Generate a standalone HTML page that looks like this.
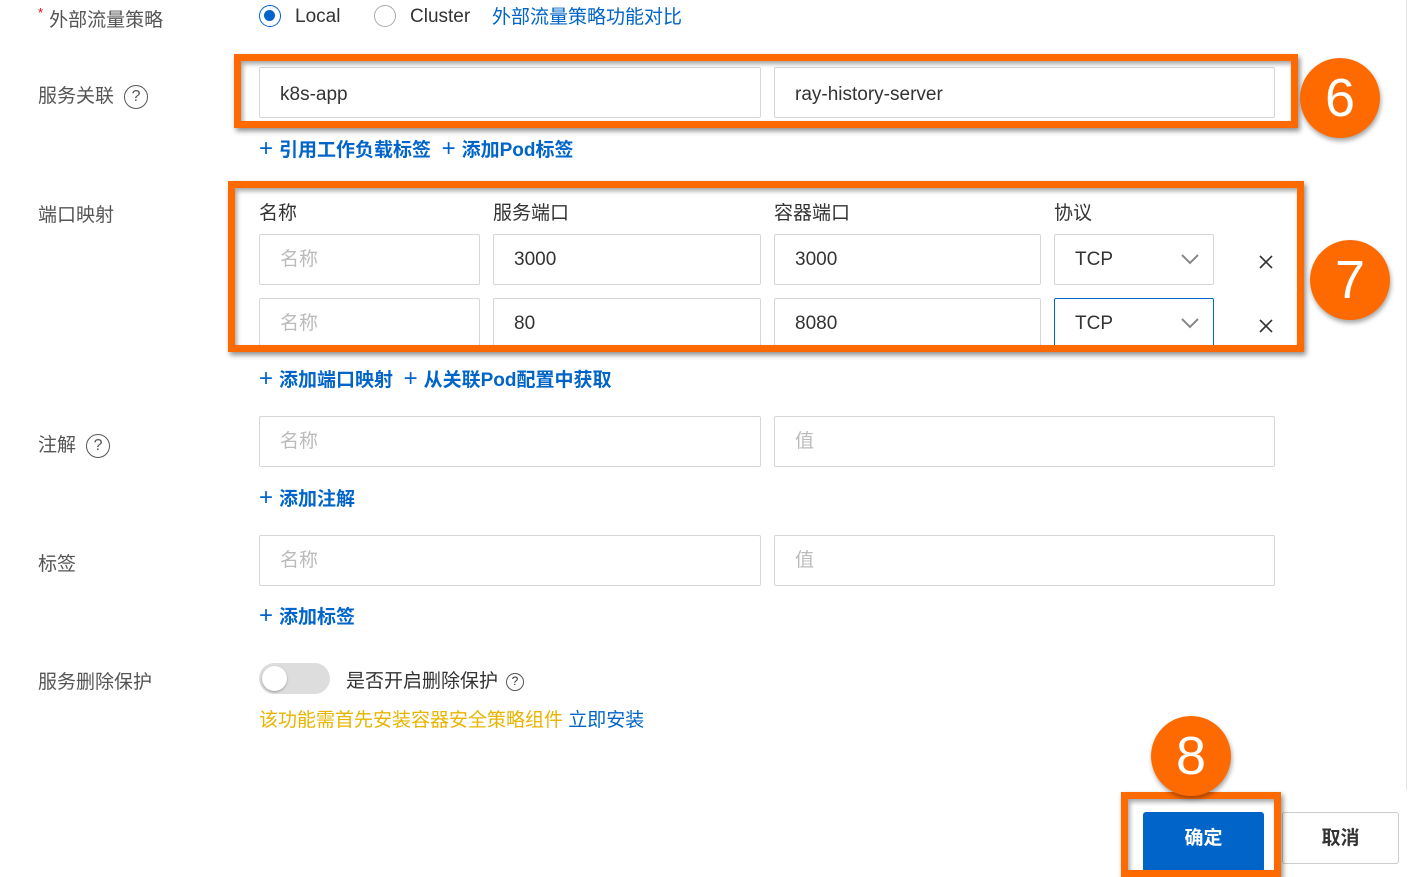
<!DOCTYPE html>
<html><head><meta charset="utf-8"><style>
*{box-sizing:border-box;margin:0;padding:0}
body{width:1408px;height:870px;background:#fff;position:relative;overflow:hidden;font-family:"Liberation Sans","Noto Sans CJK SC",sans-serif;color:#333;font-size:19px}
.a{position:absolute;white-space:nowrap}
.lbl{color:#555;font-size:19px}
.in{position:absolute;border:1px solid #d6d6d6;border-radius:2px;height:51px;padding-left:20px;line-height:49px;font-size:19px;color:#333;background:#fff}
.ph{color:#bbb}
.link{color:#0064c8;font-weight:bold;font-size:19px}
.p{font-weight:normal;font-size:24px;margin-right:6px}
.box{position:absolute;border:7px solid #ff6a00;box-shadow:2px 3px 5px rgba(0,0,0,.45),inset 2px 3px 5px rgba(0,0,0,.35)}
.c{position:absolute;width:80px;height:80px;border-radius:50%;background:#ff6a00;color:#fff;font-size:54px;text-align:center;line-height:80px;box-shadow:1px 3px 5px rgba(0,0,0,.35)}
.q{display:inline-block;width:24px;height:24px;border:1.5px solid #555;border-radius:50%;font-size:16px;text-align:center;line-height:21px;vertical-align:middle;margin-left:10px}
</style></head><body>
<div style="position:absolute;left:1406px;top:0;width:1px;height:790px;background:#e5e5e5"></div>
<div class="a lbl" style="left:38px;top:5px"><span style="color:#e00;font-size:13px;vertical-align:top;margin-right:6px">*</span>外部流量策略</div>
<div class="a" style="left:259px;top:5px;width:22px;height:22px;border:1.5px solid #0064c8;border-radius:50%"><div style="margin:4px;width:11px;height:11px;border-radius:50%;background:#0064c8"></div></div>
<div class="a" style="left:295px;top:6px;font-size:19px">Local</div>
<div class="a" style="left:374px;top:5px;width:22px;height:22px;border:1.5px solid #aaa;border-radius:50%"></div>
<div class="a" style="left:410px;top:6px;font-size:19px">Cluster</div>
<div class="a" style="left:492px;top:2px;color:#0064c8">外部流量策略功能对比</div>

<div class="a lbl" style="left:38px;top:81px">服务关联<span class="q">?</span></div>
<div class="in" style="left:259px;top:67px;width:502px;padding-top:2px">k8s-app</div>
<div class="in" style="left:774px;top:67px;width:501px;padding-top:2px">ray-history-server</div>
<div class="box" style="left:234px;top:54px;width:1064px;height:74px"></div>
<div class="c" style="left:1300px;top:58px">6</div>
<div class="a link" style="left:259px;top:135px"><span class="p">+</span>引用工作负载标签 &nbsp;<span class="p">+</span>添加Pod标签</div>

<div class="a lbl" style="left:38px;top:200px">端口映射</div>
<div class="a" style="left:259px;top:198px">名称</div>
<div class="a" style="left:493px;top:198px">服务端口</div>
<div class="a" style="left:774px;top:198px">容器端口</div>
<div class="a" style="left:1054px;top:198px">协议</div>
<div class="in ph" style="left:259px;top:234px;width:221px">名称</div>
<div class="in" style="left:493px;top:234px;width:268px">3000</div>
<div class="in" style="left:774px;top:234px;width:267px">3000</div>
<div class="in" style="left:1054px;top:234px;width:160px">TCP</div>
<div class="in ph" style="left:259px;top:298px;width:221px">名称</div>
<div class="in" style="left:493px;top:298px;width:268px">80</div>
<div class="in" style="left:774px;top:298px;width:267px">8080</div>
<div class="in" style="left:1054px;top:298px;width:160px;border-color:#0064c8">TCP</div>
<svg class="a" style="left:1180px;top:252px" width="20" height="14"><path d="M2 3l8 8 8-8" fill="none" stroke="#888" stroke-width="2"/></svg>
<svg class="a" style="left:1180px;top:316px" width="20" height="14"><path d="M2 3l8 8 8-8" fill="none" stroke="#888" stroke-width="2"/></svg>
<svg class="a" style="left:1259px;top:255px" width="14" height="14"><path d="M1 1l12 12M13 1L1 13" stroke="#333" stroke-width="1.6"/></svg>
<svg class="a" style="left:1259px;top:319px" width="14" height="14"><path d="M1 1l12 12M13 1L1 13" stroke="#333" stroke-width="1.6"/></svg>
<div class="box" style="left:228px;top:181px;width:1076px;height:171px"></div>
<div class="c" style="left:1310px;top:240px">7</div>
<div class="a link" style="left:259px;top:365px"><span class="p">+</span>添加端口映射 &nbsp;<span class="p">+</span>从关联Pod配置中获取</div>

<div class="a lbl" style="left:38px;top:430px">注解<span class="q">?</span></div>
<div class="in ph" style="left:259px;top:416px;width:502px">名称</div>
<div class="in ph" style="left:774px;top:416px;width:501px">值</div>
<div class="a link" style="left:259px;top:484px"><span class="p">+</span>添加注解</div>

<div class="a lbl" style="left:38px;top:549px">标签</div>
<div class="in ph" style="left:259px;top:535px;width:502px">名称</div>
<div class="in ph" style="left:774px;top:535px;width:501px">值</div>
<div class="a link" style="left:259px;top:602px"><span class="p">+</span>添加标签</div>

<div class="a lbl" style="left:38px;top:667px">服务删除保护</div>
<div class="a" style="left:259px;top:663px;width:71px;height:31px;border-radius:16px;background:#ddd"><div style="margin:3px;width:25px;height:25px;border-radius:50%;background:#fff;box-shadow:0 1px 2px rgba(0,0,0,.3)"></div></div>
<div class="a" style="left:346px;top:666px">是否开启删除保护<span class="q" style="width:18px;height:18px;font-size:12px;line-height:15px;margin-left:8px">?</span></div>
<div class="a" style="left:259px;top:705px;color:#e8b400">该功能需首先安装容器安全策略组件 <span style="color:#0064c8">立即安装</span></div>

<div class="a" style="left:1143px;top:812px;width:121px;height:60px;background:#0064c8;border-radius:3px;color:#fff;font-weight:bold;text-align:center;line-height:54px;font-size:19px">确定</div>
<div class="a" style="left:1282px;top:812px;width:117px;height:52px;border:1px solid #ccc;border-radius:3px;font-weight:bold;text-align:center;line-height:52px;font-size:19px">取消</div>
<div class="box" style="left:1121px;top:792px;width:160px;height:85px"></div>
<div class="c" style="left:1151px;top:716px">8</div>
</body></html>
